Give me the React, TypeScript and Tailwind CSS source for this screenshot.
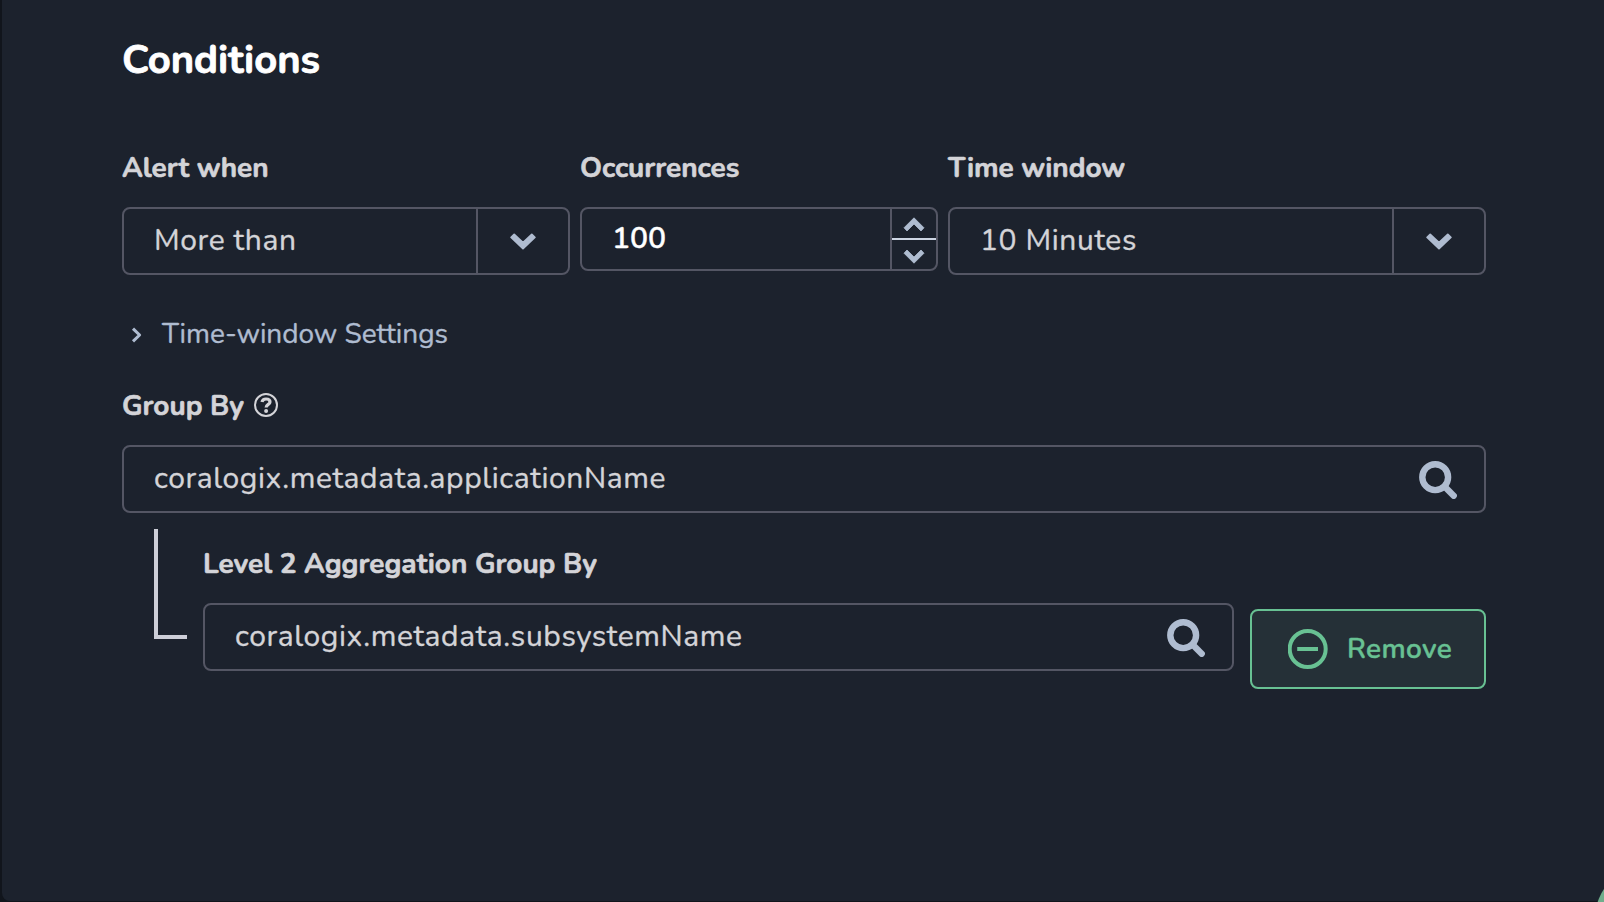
import React from "react";

function ChevronDown() {
  return (
    <svg className="h-[17px] w-[26px]" viewBox="0 0 26 17">
      <path
        d="M1.2 4.4 L4.2 1.4 L13 9.6 L21.8 1.4 L24.8 4.4 L13 15.6 Z"
        fill="#afbcd0"
        stroke="#afbcd0"
        strokeWidth="1.8"
        strokeLinejoin="round"
      />
    </svg>
  );
}

function StepChevron({ up = false }: { up?: boolean }) {
  return (
    <svg className="h-[15px] w-[22px]" viewBox="0 0 22 15">
      <path
        d={
          up
            ? "M1 10.8 L11 0.8 L21 10.8 L18 14 L11 7 L4 14 Z"
            : "M1 4.2 L11 14.2 L21 4.2 L18 1 L11 8 L4 1 Z"
        }
        fill="#afbcd0"
        stroke="#afbcd0"
        strokeWidth="0.8"
        strokeLinejoin="round"
      />
    </svg>
  );
}

function SearchIcon() {
  return (
    <svg className="size-[38px] shrink-0" viewBox="0 0 38 38" fill="none" stroke="#afbcd0">
      <circle cx="16.2" cy="16.2" r="12.9" strokeWidth="6.4" />
      <path d="M26 26 L34.7 34.7" strokeWidth="6.4" strokeLinecap="round" />
    </svg>
  );
}

function HelpIcon() {
  return (
    <svg className="mb-0.5 size-6" viewBox="0 0 24 24" fill="none" stroke="#d4d4d8">
      <circle cx="12" cy="12" r="11" strokeWidth="2" />
      <path
        d="M8 9 C8.4 7 9.9 6 12 6 C14.3 6 16 7.1 16 9 C16 11.4 12.1 11.4 12.1 14.6"
        strokeWidth="3.2"
      />
      <circle cx="12.1" cy="18" r="2" fill="#d4d4d8" stroke="none" />
    </svg>
  );
}

function RemoveIcon() {
  return (
    <svg className="size-10 shrink-0" viewBox="0 0 40 40" fill="none" stroke="#68c193" strokeWidth="4">
      <circle cx="19.7" cy="20" r="18" />
      <path d="M9.2 20 H30" />
    </svg>
  );
}

function Label({ children }: { children: React.ReactNode }) {
  return (
    <div className="flex h-10 items-center text-[28px] leading-10 font-bold tracking-[-0.01px] whitespace-nowrap text-[#d4d4d8] [-webkit-text-stroke:0.6px_#d4d4d8]">
      {children}
    </div>
  );
}

function Select({ value }: { value: string }) {
  return (
    <div className="mt-[19px] flex h-[68px] rounded-[8px] border-2 border-[#545664]">
      <div className="flex-1 pl-[30px] text-[30px] leading-[64px] tracking-[0.6px] text-[#d4d4d8] [-webkit-text-stroke:0.35px_#d4d4d8]">
        {value}
      </div>
      <div className="flex w-[92px] items-start justify-center border-l-2 border-[#545664] pt-6">
        <ChevronDown />
      </div>
    </div>
  );
}

function NumberField({ value }: { value: string }) {
  return (
    <div className="mt-[19px] flex h-16 rounded-[8px] border-2 border-[#545664]">
      <div className="flex-1 pl-[30px] text-[30px] leading-[60px] font-semibold text-white [-webkit-text-stroke:0.35px_#fff]">
        {value}
      </div>
      <div className="flex w-[46px] flex-col border-l-2 border-[#545664]">
        <div className="flex h-[31px] justify-center border-b-2 border-[#cdd5e3] pt-2">
          <StepChevron up />
        </div>
        <div className="flex justify-center pt-[9px]">
          <StepChevron />
        </div>
      </div>
    </div>
  );
}

function SearchField({ value }: { value: string }) {
  return (
    <div className="mt-[19px] flex h-[68px] justify-between rounded-[8px] border-2 border-[#545664] pr-[27px] pl-[30px]">
      <span className="text-[30px] leading-[64px] tracking-[0.6px] text-[#d4d4d8] [-webkit-text-stroke:0.35px_#d4d4d8]">
        {value}
      </span>
      <div className="pt-3.5">
        <SearchIcon />
      </div>
    </div>
  );
}

export default function App() {
  return (
    <div className="h-[902px] overflow-hidden bg-[#11151c] pb-px pl-0.5 font-['Nunito',Lato,sans-serif]">
      <main className="h-[901px] overflow-hidden rounded-bl-[8px] bg-[#1c222d] pt-8 pr-[118px] pl-[120px]">
        <h1 className="h-14 text-[40px] leading-14 font-bold tracking-[-0.05px] text-white [-webkit-text-stroke:0.8px_#fff]">
          Conditions
        </h1>

        <div className="mt-[60px] flex gap-2.5">
          <div className="w-[448px]">
            <Label>Alert when</Label>
            <Select value="More than" />
          </div>
          <div className="w-[358px] shrink-0">
            <Label>Occurrences</Label>
            <NumberField value="100" />
          </div>
          <div className="w-[538px] shrink-0">
            <Label>Time window</Label>
            <Select value="10 Minutes" />
          </div>
        </div>

        <div className="mt-[39px] flex h-10 items-center pl-[9px]">
          <svg className="mt-px h-4 w-[11px]" viewBox="0 0 11 16" fill="none">
            <path d="M2 1.6 L8.6 8 L2 14.4" stroke="#afbcd0" strokeWidth="3" strokeLinejoin="round" />
          </svg>
          <span className="pl-5 text-[28px] leading-10 tracking-[-0.04px] text-[#afbcd0] [-webkit-text-stroke:0.35px_#afbcd0]">
            Time-window Settings
          </span>
        </div>

        <div className="mt-8">
          <Label>
            <span className="mr-2.5">Group By</span>
            <HelpIcon />
          </Label>
          <SearchField value="coralogix.metadata.applicationName" />
        </div>

        <div className="mt-4 flex">
          <div className="ml-8 h-[110px] w-[33px] border-b-4 border-l-4 border-[#cdced8]" />
          <div className="ml-4 w-[1031px] pt-[15px]">
            <Label>Level 2 Aggregation Group By</Label>
            <SearchField value="coralogix.metadata.subsystemName" />
          </div>
          <button className="mt-20 ml-4 flex h-20 w-[236px] items-center rounded-[8px] border-2 border-[#68c193] bg-[#253037] pl-9 text-[28px] font-semibold tracking-[0.4px] text-[#68c193] [-webkit-text-stroke:0.4px_#68c193]">
            <RemoveIcon />
            <span className="ml-[19px]">Remove</span>
          </button>
        </div>
      </main>
      <div className="absolute top-[858px] left-[1592px] h-11 w-3 overflow-hidden">
        <div className="size-24 translate-x-[3.4px] translate-y-[10.5px] rounded-full bg-[#6fae8c]" />
      </div>
    </div>
  );
}
